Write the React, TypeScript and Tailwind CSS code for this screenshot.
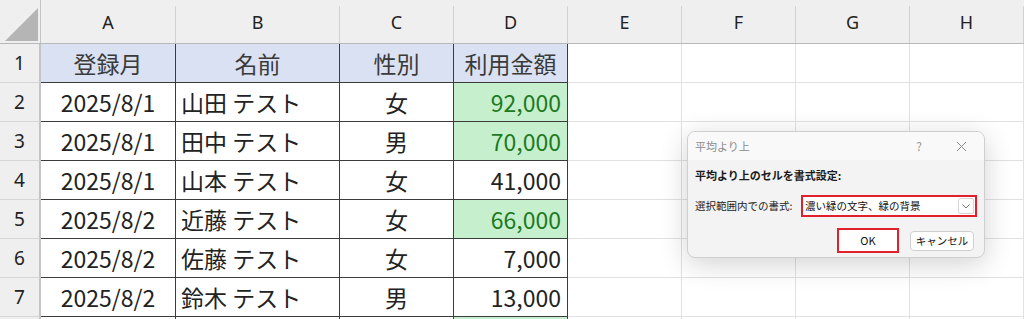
import React from 'react';

type Row = {
  date: string;
  name: string;
  gender: string;
  amount: string;
  high?: boolean;
};

const rows: Row[] = [
  { date: '2025/8/1', name: '山田 テスト', gender: '女', amount: '92,000', high: true },
  { date: '2025/8/1', name: '田中 テスト', gender: '男', amount: '70,000', high: true },
  { date: '2025/8/1', name: '山本 テスト', gender: '女', amount: '41,000' },
  { date: '2025/8/2', name: '近藤 テスト', gender: '女', amount: '66,000', high: true },
  { date: '2025/8/2', name: '佐藤 テスト', gender: '女', amount: '7,000' },
  { date: '2025/8/2', name: '鈴木 テスト', gender: '男', amount: '13,000' },
];

const letters = [
  { l: 'A', w: 'w-[135px]' },
  { l: 'B', w: 'w-[164px]' },
  { l: 'C', w: 'w-[114px]' },
  { l: 'D', w: 'w-[114px]' },
  { l: 'E', w: 'w-[114px]' },
  { l: 'F', w: 'w-[114px]' },
  { l: 'G', w: 'w-[114px]' },
  { l: 'H', w: 'w-[114px]' },
];

const cellFont = "font-['Noto_Sans_CJK_JP',sans-serif] text-[23px]";
const tableCell = 'h-full border-r border-b border-[#3c3c3c] flex items-center';
const emptyCell = 'w-[114px] h-full border-r border-b border-[#e1e1e1]';

const RowHeader = ({ n }: { n?: number }) => (
  <div className="w-[41px] h-full shrink-0 bg-[#efefef] border-r-2 border-b border-r-[#c4c4c4] border-b-[#d6d6d6] flex items-center justify-center font-['Noto_Sans',sans-serif] text-[19px] text-[#222]">
    {n}
  </div>
);

const EmptyCells = () => (
  <>
    <div className={emptyCell} />
    <div className={emptyCell} />
    <div className={emptyCell} />
    <div className={emptyCell} />
  </>
);

const Dialog = () => (
  <div className="absolute left-[687px] top-[131px] w-[298px] h-[127px] rounded-lg border border-[#cfcfcf] bg-[#f3f3f3] shadow-[0_6px_28px_rgba(0,0,0,0.18)] overflow-hidden font-['Noto_Sans_CJK_JP',sans-serif]">
    <div className="h-[28px] bg-[#f9f9f9] flex items-center pl-[7px] pr-[14px]">
      <span className="text-[11px] text-[#8c8c8c]">平均より上</span>
      <span className="ml-auto text-[12px] text-[#9a9a9a] mr-[34px]">?</span>
      <svg width="11" height="11" viewBox="0 0 11 11" className="mr-[3px]">
        <path d="M1 1L10 10M10 1L1 10" stroke="#8a8a8a" strokeWidth="1" />
      </svg>
    </div>
    <div className="px-[7px] pt-[7px]">
      <div className="text-[11px] font-bold text-[#1a1a1a] leading-[16px]">平均より上のセルを書式設定:</div>
      <div className="flex items-center mt-[12px]">
        <span className="text-[10.5px] text-[#222] w-[108px]">選択範囲内での書式:</span>
        <div className="w-[179px] h-[22px] border-2 border-[#e0202a] bg-white flex items-center pl-[2px]">
          <span className="text-[10.5px] text-[#111]">濃い緑の文字、緑の背景</span>
          <div className="ml-auto mr-[1px] w-[16px] h-[16px] border border-[#d6d6d6] rounded-[2px] flex items-center justify-center">
            <svg width="8" height="5" viewBox="0 0 8 5">
              <path d="M0.5 0.5L4 4L7.5 0.5" fill="none" stroke="#777" strokeWidth="1" />
            </svg>
          </div>
        </div>
      </div>
      <div className="flex items-center justify-end mt-[11px] pr-[3px] gap-[11px]">
        <div className="w-[62px] h-[25px] border-2 border-[#e0202a] bg-white flex items-center justify-center text-[11px] text-[#111]">
          OK
        </div>
        <div className="w-[64px] h-[20px] border border-[#cfcfcf] rounded-[4px] bg-white flex items-center justify-center text-[10.5px] text-[#111]">
          キャンセル
        </div>
      </div>
    </div>
  </div>
);

export default function App() {
  return (
    <div className="relative w-[1024px] h-[319px] overflow-hidden bg-white">
      <div className="flex h-[44px] bg-[#efefef] border-b border-[#b8b8b8]">
        <div className="w-[41px] shrink-0 h-full border-r border-[#c4c4c4] flex items-end justify-end pr-[2px] pb-[2px]">
          <svg width="33" height="33" viewBox="0 0 33 33">
            <path d="M33 0L33 33L0 33Z" fill="#b5b5b5" />
          </svg>
        </div>
        {letters.map((c) => (
          <div key={c.l} className={`${c.w} shrink-0 h-full flex flex-col`}>
            <div className="h-[6px]" />
            <div className="flex-1 border-r border-[#d2d2d2] flex items-center justify-center pb-[4px] font-['Noto_Sans',sans-serif] text-[18px] text-[#222]">
              {c.l}
            </div>
          </div>
        ))}
      </div>

      <div className="flex h-[39px]">
        <RowHeader n={1} />
        <div className={`w-[135px] bg-[#d9e1f2] justify-center text-[#3a3a3a] ${tableCell} ${cellFont}`}>登録月</div>
        <div className={`w-[164px] bg-[#d9e1f2] justify-center text-[#3a3a3a] ${tableCell} ${cellFont}`}>名前</div>
        <div className={`w-[114px] bg-[#d9e1f2] justify-center text-[#3a3a3a] ${tableCell} ${cellFont}`}>性別</div>
        <div className={`w-[114px] bg-[#d9e1f2] justify-center text-[#3a3a3a] ${tableCell} ${cellFont}`}>利用金額</div>
        <EmptyCells />
      </div>

      {rows.map((r, i) => (
        <div key={i} className="flex h-[39px]">
          <RowHeader n={i + 2} />
          <div className={`w-[135px] justify-center text-[#222] ${tableCell} ${cellFont}`}>{r.date}</div>
          <div className={`w-[164px] pl-[5px] text-[#222] ${tableCell} ${cellFont}`}>{r.name}</div>
          <div className={`w-[114px] justify-center text-[#222] ${tableCell} ${cellFont}`}>{r.gender}</div>
          <div
            className={`w-[114px] justify-end pr-[6px] ${tableCell} ${cellFont} ${
              r.high ? 'bg-[#c6efce] text-[#1e7a1e]' : 'text-[#222]'
            }`}
          >
            {r.amount}
          </div>
          <EmptyCells />
        </div>
      ))}

      <div className="flex h-[39px]">
        <RowHeader />
        <div className={`w-[135px] ${tableCell}`} />
        <div className={`w-[164px] ${tableCell}`} />
        <div className={`w-[114px] ${tableCell}`} />
        <div className={`w-[114px] bg-[#c6efce] ${tableCell}`} />
        <EmptyCells />
      </div>

      <Dialog />
    </div>
  );
}
